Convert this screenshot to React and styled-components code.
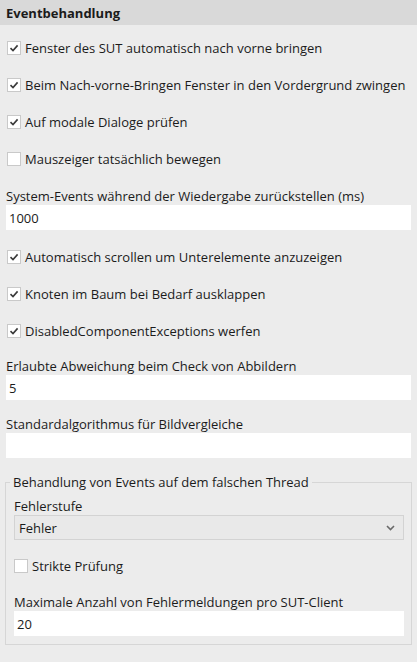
import React from 'react';
import styled, { createGlobalStyle } from 'styled-components';

const GlobalStyle = createGlobalStyle`
  body {
    margin: 0;
    background: #ececec;
    font-family: "Open Sans", "Noto Sans", sans-serif;
    font-size: 13px;
    color: #1b1b1b;
  }
`;

const Panel = styled.div`
  width: 417px;
  min-height: 662px;
  background: #ececec;
`;

const Header = styled.div`
  height: 25px;
  background: #d9d9d9;
  display: flex;
  align-items: center;
  padding-left: 6px;
  font-weight: 700;
  font-size: 13px;
`;

const Body = styled.div`
  padding: 4px 6px 0 6px;
  display: flex;
  flex-direction: column;
`;

const CheckRow = styled.label`
  height: 37px;
  display: flex;
  align-items: center;
  gap: 4px;
  padding-left: ${({ indent }) => indent ?? 1}px;
  margin-top: ${({ top }) => top || 0}px;
  white-space: nowrap;
`;

const Box = styled.span`
  width: 12px;
  height: 12px;
  border: 1px solid #c9c9c9;
  background: #fff;
  display: flex;
  align-items: center;
  justify-content: center;
  flex-shrink: 0;
`;

const Field = styled.div`
  display: flex;
  flex-direction: column;
  padding-top: ${({ top }) => top}px;
  margin-bottom: ${({ bottom }) => bottom || 0}px;
`;

const Label = styled.div`
  height: 17px;
  line-height: 17px;
  white-space: nowrap;
`;

const Input = styled.div`
  height: 25px;
  background: #fff;
  display: flex;
  align-items: center;
  padding-left: 3px;
`;

const Group = styled.fieldset`
  margin: 16px 0 0 -1px;
  padding: 0 7px 8px 8px;
  border: 1px solid #d6d6d6;
  width: 407px;
  box-sizing: border-box;
`;

const Legend = styled.legend`
  padding: 0 3px;
  margin-left: -4px;
  line-height: 17px;
`;

const Select = styled.div`
  height: 25px;
  box-sizing: border-box;
  border: 1px solid #d3d3d3;
  background: #e9e9e9;
  display: flex;
  align-items: center;
  justify-content: space-between;
  padding: 0 8px 0 4px;
`;

const Check = ({ checked }) => (
  <Box>
    {checked && (
      <svg width="10" height="10" viewBox="0 0 10 10">
        <path d="M1.5 5.2 L4 7.6 L8.6 2.4" fill="none" stroke="#3a3a3a" strokeWidth="1.6" />
      </svg>
    )}
  </Box>
);

const CheckItem = ({ checked, children, indent, top }) => (
  <CheckRow indent={indent} top={top}>
    <Check checked={checked} />
    <span>{children}</span>
  </CheckRow>
);

const App = () => (
  <Panel>
    <GlobalStyle />
    <Header>Eventbehandlung</Header>
    <Body>
      <CheckItem checked>Fenster des SUT automatisch nach vorne bringen</CheckItem>
      <CheckItem checked>Beim Nach-vorne-Bringen Fenster in den Vordergrund zwingen</CheckItem>
      <CheckItem checked>Auf modale Dialoge prüfen</CheckItem>
      <CheckItem>Mauszeiger tatsächlich bewegen</CheckItem>
      <Field top={11} bottom={8}>
        <Label>System-Events während der Wiedergabe zurückstellen (ms)</Label>
        <Input>1000</Input>
      </Field>
      <CheckItem checked>Automatisch scrollen um Unterelemente anzuzeigen</CheckItem>
      <CheckItem checked>Knoten im Baum bei Bedarf ausklappen</CheckItem>
      <CheckItem checked>DisabledComponentExceptions werfen</CheckItem>
      <Field top={9}>
        <Label>Erlaubte Abweichung beim Check von Abbildern</Label>
        <Input>5</Input>
      </Field>
      <Field top={16}>
        <Label>Standardalgorithmus für Bildvergleiche</Label>
        <Input />
      </Field>
      <Group>
        <Legend>Behandlung von Events auf dem falschen Thread</Legend>
        <Field top={7}>
          <Label>Fehlerstufe</Label>
          <Select>
            <span>Fehler</span>
            <svg width="9" height="6" viewBox="0 0 9 6">
              <path d="M1 1 L4.5 4.5 L8 1" fill="none" stroke="#6a6a6a" strokeWidth="1.6" />
            </svg>
          </Select>
        </Field>
        <CheckItem indent={0} top={7}>Strikte Prüfung</CheckItem>
        <Field top={10}>
          <Label>Maximale Anzahl von Fehlermeldungen pro SUT-Client</Label>
          <Input>20</Input>
        </Field>
      </Group>
    </Body>
  </Panel>
);

export default App;
